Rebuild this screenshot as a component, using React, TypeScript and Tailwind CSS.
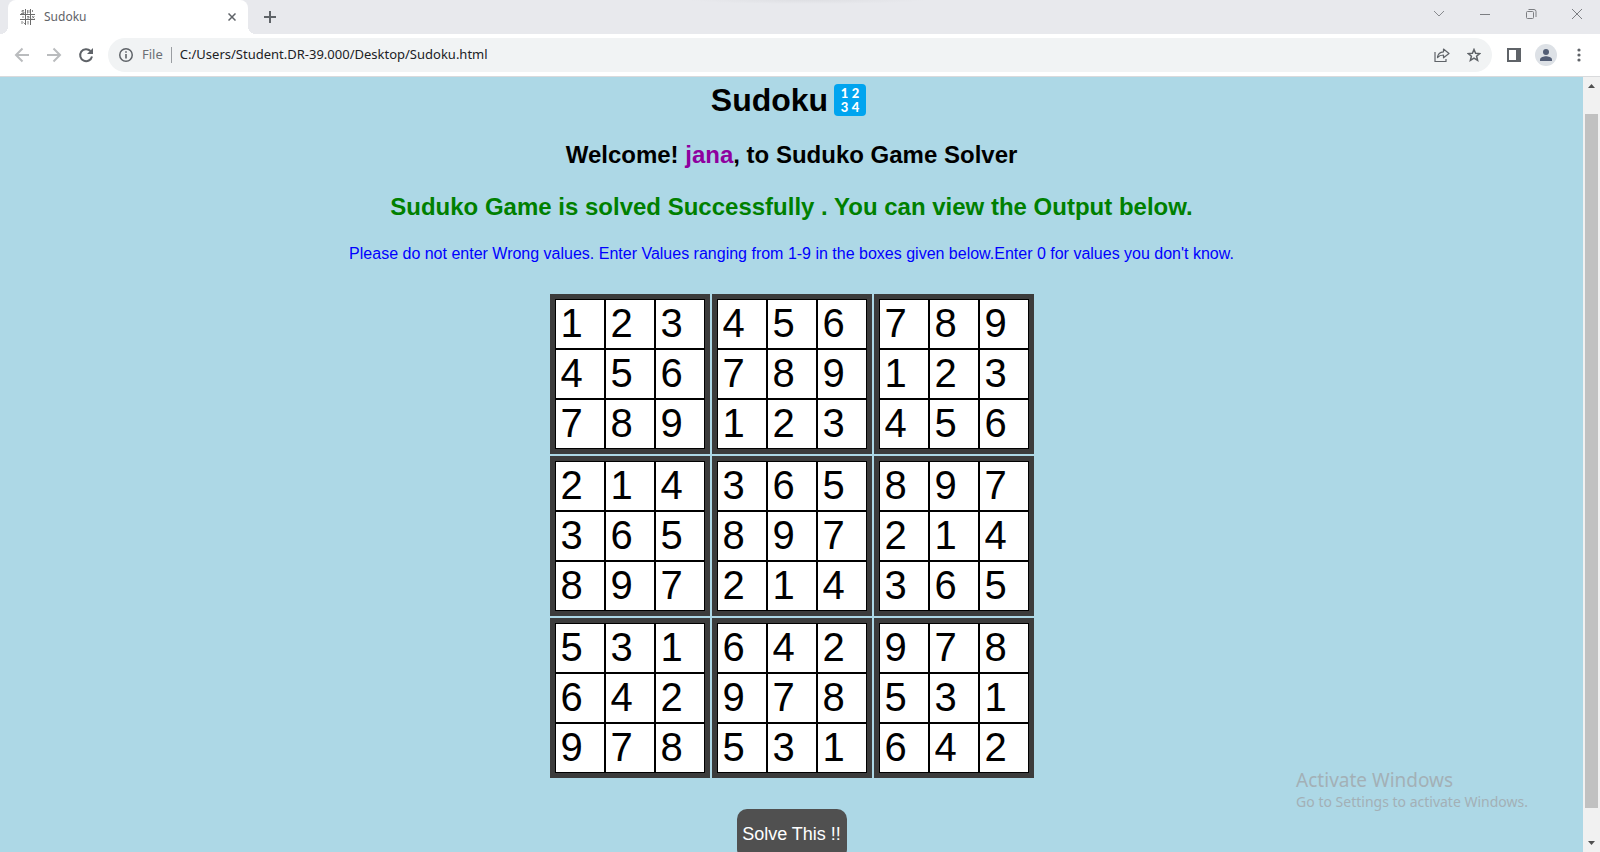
import React from "react";

// Each entry is one 3x3 box, its nine digits in reading order.
const BOXES: number[][] = [
  [1, 2, 3, 4, 5, 6, 7, 8, 9],
  [4, 5, 6, 7, 8, 9, 1, 2, 3],
  [7, 8, 9, 1, 2, 3, 4, 5, 6],
  [2, 1, 4, 3, 6, 5, 8, 9, 7],
  [3, 6, 5, 8, 9, 7, 2, 1, 4],
  [8, 9, 7, 2, 1, 4, 3, 6, 5],
  [5, 3, 1, 6, 4, 2, 9, 7, 8],
  [6, 4, 2, 9, 7, 8, 5, 3, 1],
  [9, 7, 8, 5, 3, 1, 6, 4, 2],
];

function Favicon() {
  return (
    <svg width="16" height="16" viewBox="0 0 16 16" fill="none" stroke="#6b6b6b" aria-hidden="true">
      <path d="M0 5.5h15M0 10.5h15M5.5 0v16M10.5 0v16" />
      <path d="M4 1.5H2v1.5h2v1.500H1M7.500 1v3.500M9 1v3M12.500 1v2M7 7.500h2v1.500H7M12 7l2.500 2.500M14.500 7L12 9.500M2 12v3M3.500 13.500l1.500 1.500M8 12v3.500M2 8h2" strokeWidth="0.8" />
    </svg>
  );
}

function TabStrip() {
  return (
    <div className="relative flex h-[34px] bg-[#e8e9ed] pl-2">
      <div className="absolute top-0 left-[43%] h-1 w-[15%] bg-[radial-gradient(ellipse_at_top,#dedfe3,#e8e9ed_70%)]" aria-hidden="true" />
      <div className="relative flex w-60 items-center rounded-t-lg bg-white pl-3 pr-2 before:absolute before:-left-2 before:bottom-0 before:size-2 before:bg-[radial-gradient(circle_at_0_0,#e8e9ed_8px,white_8px)] after:absolute after:-right-2 after:bottom-0 after:size-2 after:bg-[radial-gradient(circle_at_100%_0,#e8e9ed_8px,white_8px)]">
        <Favicon />
        <span className="ml-2 flex-1 text-xs text-[#5f6368]">Sudoku</span>
        <button aria-label="Close tab" className="p-1">
          <svg width="8" height="8" viewBox="0 0 8 8" stroke="#5f6368" strokeWidth="1.500">
            <path d="M0.500 0.500l7 7M7.500 0.500l-7 7" />
          </svg>
        </button>
      </div>
      <button aria-label="New tab" className="ml-4 self-center">
        <svg width="12" height="12" viewBox="0 0 12 12" stroke="#5f6368" strokeWidth="2">
          <path d="M6 0v12M0 6h12" />
        </svg>
      </button>
      <div className="ml-auto flex h-7 items-center">
        <button aria-label="Search tabs" className="flex w-[46px] justify-center">
          <svg width="12" height="12" viewBox="0 0 12 12" fill="none" stroke="#888a8e">
            <path d="M1 3l5 5 5-5" />
          </svg>
        </button>
        <button aria-label="Minimize" className="flex w-[46px] justify-center">
          <svg width="12" height="12" viewBox="0 0 12 12" stroke="#7c7e82">
            <path d="M1 6.500h10" />
          </svg>
        </button>
        <button aria-label="Restore" className="flex w-[46px] justify-center">
          <svg width="12" height="12" viewBox="0 0 12 12" fill="none" stroke="#7c7e82">
            <rect x="1.500" y="3.500" width="7" height="7" rx="1" />
            <path d="M3.500 1.500H9a2 2 0 0 1 2 2V9" />
          </svg>
        </button>
        <button aria-label="Close window" className="flex w-[46px] justify-center">
          <svg width="12" height="12" viewBox="0 0 12 12" stroke="#7c7e82">
            <path d="M1 1l10 10M11 1L1 11" />
          </svg>
        </button>
      </div>
    </div>
  );
}

function Toolbar() {
  return (
    <div className="flex h-[43px] items-center border-b border-[#d9dadc] bg-white pl-[14px] pr-4">
      <button aria-label="Back" className="mr-4">
        <svg width="16" height="16" viewBox="0 0 16 16" fill="none" stroke="#babcbe" strokeWidth="2">
          <path d="M15 8H2M8.500 1.500L2 8l6.500 6.500" />
        </svg>
      </button>
      <button aria-label="Forward" className="mr-4">
        <svg width="16" height="16" viewBox="0 0 16 16" fill="none" stroke="#babcbe" strokeWidth="2">
          <path d="M1 8h13M7.500 1.500L14 8l-6.500 6.500" />
        </svg>
      </button>
      <button aria-label="Reload" className="mr-[14px]">
        <svg width="16" height="16" viewBox="0 0 16 16" fill="none" stroke="#5f6368" strokeWidth="2">
          <path d="M14 9.500A6 6 0 1 1 12.500 4" />
          <path d="M15 1v6H9z" fill="#5f6368" stroke="none" />
        </svg>
      </button>
      <div className="flex h-[34px] flex-1 items-center rounded-full bg-[#f1f3f4] pl-[11px] pr-[11px]">
        <svg width="14" height="14" viewBox="0 0 14 14" fill="none" stroke="#5f6368" aria-hidden="true">
          <circle cx="7" cy="7" r="6.250" strokeWidth="1.500" />
          <path d="M7 6v4.500M7 3.200v1.600" strokeWidth="1.600" />
        </svg>
        <span className="ml-[9px] text-[13px] text-[#6b6f74]">File</span>
        <span className="ml-2 h-4 w-px bg-[#9a9da1]" />
        <input
          aria-label="Address"
          className="ml-2 min-w-0 flex-1 bg-transparent text-[13px] text-[#202124] outline-none"
          defaultValue="C:/Users/Student.DR-39.000/Desktop/Sudoku.html"
        />
        <button aria-label="Share" className="mr-[17px]">
          <svg width="16" height="16" viewBox="0 0 16 16" fill="none" stroke="#5f6368" strokeWidth="1.200">
            <path d="M1 5v9.500h11v-2.500" />
            <path d="M3.500 10.500c.3-3.500 2.500-5.500 6-5.700V2L15 6.500l-5.500 4.300V8c-2.800 0-4.500.7-6 2.500z" strokeLinejoin="round" />
          </svg>
        </button>
        <button aria-label="Bookmark">
          <svg width="14" height="14" viewBox="0 0 14 14" fill="none" stroke="#5f6368" strokeWidth="1.500">
            <path d="M7 1.500l1.600 3.800 4.100.3-3.100 2.700 1 4L7 10.100l-3.600 2.200 1-4L1.300 5.600l4.100-.3z" />
          </svg>
        </button>
      </div>
      <div className="ml-[15px] flex items-center">
        <button aria-label="Side panel">
          <svg width="14" height="14" viewBox="0 0 14 14">
            <path d="M0 0h14v14H0z" fill="#5f6368" />
            <path d="M2 2h7v10H2z" fill="#fff" />
          </svg>
        </button>
        <button aria-label="Profile" className="ml-[14px]">
          <svg width="22" height="22" viewBox="0 0 22 22">
            <circle cx="11" cy="11" r="11" fill="#dde1e6" />
            <circle cx="11" cy="8" r="3" fill="#525d75" />
            <path d="M5 17v-1.500C5 13 9 12.200 11 12.200s6 .8 6 3.300V17z" fill="#525d75" />
          </svg>
        </button>
        <button aria-label="Menu" className="ml-[17px]">
          <svg width="10" height="14" viewBox="0 0 10 14" fill="#5f6368">
            <circle cx="5" cy="2" r="1.600" />
            <circle cx="5" cy="7" r="1.600" />
            <circle cx="5" cy="12" r="1.600" />
          </svg>
        </button>
      </div>
    </div>
  );
}

function NumbersEmoji() {
  return (
    <svg className="mx-1.5" width="32" height="32" viewBox="0 0 32 32" aria-hidden="true">
      <rect width="32" height="32" rx="4" fill="#00a4ef" />
      <g fill="#fff" fontFamily="Lato, sans-serif" fontWeight="900" fontSize="13" textAnchor="middle">
        <text x="10.500" y="14">1</text>
        <text x="21.500" y="14">2</text>
        <text x="10.500" y="28">3</text>
        <text x="21.500" y="28">4</text>
      </g>
    </svg>
  );
}

function Box({ index, digits }: { index: number; digits: number[] }) {
  return (
    <div className="grid grid-cols-3 border-[5px] border-[#3c3c3c]">
      {digits.map((digit, i) => (
        <input
          key={i}
          aria-label={`Box ${index + 1}, cell ${i + 1}`}
          className="size-[50px] border border-black bg-white px-[5px] pb-0.5 text-[40px] text-black outline-none"
          defaultValue={digit}
          maxLength={1}
        />
      ))}
    </div>
  );
}

function Scrollbar() {
  return (
    <div className="flex w-[17px] flex-col items-center justify-between bg-[#f1f1f1]" aria-hidden="true">
      <svg width="17" height="17" viewBox="0 0 17 17" fill="#505050">
        <path d="M5 11l3.500-4 3.500 4z" />
      </svg>
      <div className="mt-5 mb-[27px] w-[13px] flex-1 bg-[#c1c1c1]" />
      <svg width="17" height="17" viewBox="0 0 17 17" fill="#505050">
        <path d="M5 6l3.500 4L12 6z" />
      </svg>
    </div>
  );
}

export default function App() {
  return (
    <div className="flex h-screen flex-col overflow-hidden font-['Noto_Sans',sans-serif]">
      <TabStrip />
      <Toolbar />
      <div className="relative flex min-h-0 flex-1">
        <main className="flex min-w-0 flex-1 flex-col items-center overflow-hidden bg-[#add8e6] pt-[5px] text-center font-['Liberation_Sans',Arial,sans-serif] text-black">
          <h1 className="flex items-center text-[32px] leading-9 font-bold">
            Sudoku
            <NumbersEmoji />
          </h1>
          <h2 className="mt-[23px] text-2xl leading-7 font-bold">
            Welcome! <span className="text-[#8f009f]">jana</span>, to Suduko Game Solver
          </h2>
          <h2 className="mt-6 text-2xl leading-7 font-bold text-[#008000]">
            Suduko Game is solved Successfully . You can view the Output below.
          </h2>
          <p className="mt-6 text-base leading-[18px] text-[#0000ff]">
            Please do not enter Wrong values. Enter Values ranging from 1-9 in the boxes given below.Enter 0 for values you don't know.
          </p>
          <div className="mt-[31px] grid shrink-0 grid-cols-3 gap-0.5">
            {BOXES.map((digits, i) => (
              <Box key={i} index={i} digits={digits} />
            ))}
          </div>
          <button className="mt-[31px] h-[50px] w-[110px] shrink-0 rounded-[10px] bg-[#505050] text-lg text-white">
            Solve This !!
          </button>
        </main>
        <div className="pointer-events-none absolute right-[72px] bottom-10 text-[#a3b0b6]">
          <p className="text-[19px] leading-6">Activate Windows</p>
          <p className="text-sm leading-5">Go to Settings to activate Windows.</p>
        </div>
        <Scrollbar />
      </div>
    </div>
  );
}
